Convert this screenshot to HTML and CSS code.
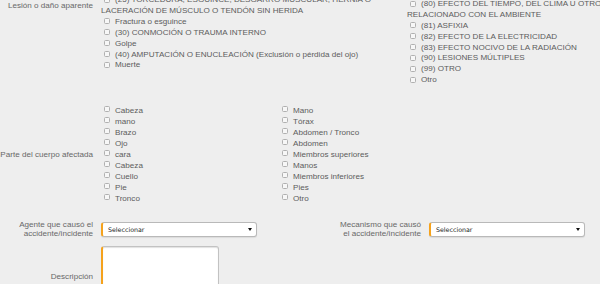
FILE: index.html
```html
<!DOCTYPE html>
<html lang="es">
<head>
<meta charset="utf-8">
<title>Formulario de accidente</title>
<link rel="stylesheet" href="styles.css">
</head>
<body>
<main class="form">
  <section class="row row-lesion">
    <div class="label lbl-lesion">Lesión o daño aparente</div>
    <div class="field">
      <ul class="checks lesion-a">
        <li class="wrap"><div class="opt"><span class="cb"></span><span>(25) TORCEDURA, ESGUINCE, DESGARRO MUSCULAR, HERNIA O</span></div><div class="cont">LACERACIÓN DE MÚSCULO O TENDÓN SIN HERIDA</div></li>
        <li class="opt"><span class="cb"></span><span>Fractura o esguince</span></li>
        <li class="opt"><span class="cb"></span><span>(30) CONMOCIÓN O TRAUMA INTERNO</span></li>
        <li class="opt"><span class="cb"></span><span>Golpe</span></li>
        <li class="opt"><span class="cb"></span><span>(40) AMPUTACIÓN O ENUCLEACIÓN (Exclusión o pérdida del ojo)</span></li>
        <li class="opt"><span class="cb"></span><span>Muerte</span></li>
      </ul>
      <ul class="checks lesion-b">
        <li class="wrap"><div class="opt"><span class="cb"></span><span>(80) EFECTO DEL TIEMPO, DEL CLIMA U OTRO</span></div><div class="cont">RELACIONADO CON EL AMBIENTE</div></li>
        <li class="opt"><span class="cb"></span><span>(81) ASFIXIA</span></li>
        <li class="opt"><span class="cb"></span><span>(82) EFECTO DE LA ELECTRICIDAD</span></li>
        <li class="opt"><span class="cb"></span><span>(83) EFECTO NOCIVO DE LA RADIACIÓN</span></li>
        <li class="opt"><span class="cb"></span><span>(90) LESIONES MÚLTIPLES</span></li>
        <li class="opt"><span class="cb"></span><span>(99) OTRO</span></li>
        <li class="opt"><span class="cb"></span><span>Otro</span></li>
      </ul>
    </div>
  </section>

  <section class="row row-body">
    <div class="label">Parte del cuerpo afectada</div>
    <div class="field">
      <ul class="checks body-list body-a">
        <li class="opt"><span class="cb"></span><span>Cabeza</span></li>
        <li class="opt"><span class="cb"></span><span>mano</span></li>
        <li class="opt"><span class="cb"></span><span>Brazo</span></li>
        <li class="opt"><span class="cb"></span><span>Ojo</span></li>
        <li class="opt"><span class="cb"></span><span>cara</span></li>
        <li class="opt"><span class="cb"></span><span>Cabeza</span></li>
        <li class="opt"><span class="cb"></span><span>Cuello</span></li>
        <li class="opt"><span class="cb"></span><span>Pie</span></li>
        <li class="opt"><span class="cb"></span><span>Tronco</span></li>
      </ul>
      <ul class="checks body-list body-b">
        <li class="opt"><span class="cb"></span><span>Mano</span></li>
        <li class="opt"><span class="cb"></span><span>Tórax</span></li>
        <li class="opt"><span class="cb"></span><span>Abdomen / Tronco</span></li>
        <li class="opt"><span class="cb"></span><span>Abdomen</span></li>
        <li class="opt"><span class="cb"></span><span>Miembros superiores</span></li>
        <li class="opt"><span class="cb"></span><span>Manos</span></li>
        <li class="opt"><span class="cb"></span><span>Miembros inferiores</span></li>
        <li class="opt"><span class="cb"></span><span>Pies</span></li>
        <li class="opt"><span class="cb"></span><span>Otro</span></li>
      </ul>
    </div>
  </section>

  <section class="selects">
    <div class="label two-line">Agente que causó el<br>accidente/incidente</div>
    <div class="select"><span class="select-text">Seleccionar</span><span class="arrow"></span></div>
    <div class="label two-line">Mecanismo que causó<br>el accidente/incidente</div>
    <div class="select"><span class="select-text">Seleccionar</span><span class="arrow"></span></div>
  </section>

  <section class="row row-desc">
    <div class="label">Descripción</div>
    <div class="textarea"></div>
  </section>
</main>
</body>
</html>
```
FILE: styles.css
```css
html, body {
  margin: 0;
  padding: 0;
  overflow: hidden;
  background: #eeeeee;
}

body {
  width: 600px;
  height: 284px;
  font-family: "Liberation Sans", Arial, sans-serif;
  font-size: 8.1px;
  color: #5c5c5c;
}

.form {
  margin-top: -4.65px;
}

.row {
  display: flex;
  column-gap: 8px;
}

.label {
  width: 93px;
  flex: none;
  text-align: right;
  color: #686868;
  line-height: 10.85px;
}

.field {
  display: flex;
  align-items: flex-start;
}

.checks {
  --lh: 10.85px;
  list-style: none;
  margin: 0;
  padding: 0;
  line-height: var(--lh);
  white-space: nowrap;
}

.body-list {
  --lh: 11px;
}

.opt {
  display: flex;
  align-items: center;
  height: var(--lh);
}

.cont {
  height: var(--lh);
}

.cb {
  flex: none;
  box-sizing: border-box;
  width: 6px;
  height: 6px;
  border: 1px solid #b0b0b0;
  border-radius: 1.5px;
  background: #f7f7f7;
  margin: 0 5px 2px 3px;
}

.row-lesion {
  align-items: flex-start;
}

.lbl-lesion {
  margin-top: 5.9px;
}

.lesion-a {
  width: 306px;
  flex: none;
}

.lesion-b {
  margin-top: 3.9px;
}

.row-body {
  align-items: center;
  margin-top: 18.7px;
}

.row-body .label {
  line-height: 11px;
}

.body-a {
  width: 178px;
  flex: none;
}

.selects {
  display: grid;
  grid-template-columns: 93px 156px 156px 156px;
  column-gap: 8px;
  align-items: center;
  margin-top: 16.45px;
}

.selects .label {
  width: auto;
  line-height: 9px;
}

.select {
  box-sizing: border-box;
  height: 15px;
  display: flex;
  align-items: center;
  justify-content: space-between;
  background: #ffffff;
  border: 1px solid #b9b9b9;
  border-left: 2px solid #f5a21c;
  border-radius: 3px;
  box-shadow: 0 1px 1px rgba(0, 0, 0, 0.08);
  padding: 0 4px 0 5px;
}

.select-text {
  font-family: "DejaVu Sans", Verdana, sans-serif;
  font-size: 6.3px;
  color: #1a1a1a;
}

.arrow {
  width: 0;
  height: 0;
  border-left: 2px solid transparent;
  border-right: 2px solid transparent;
  border-top: 3px solid #111111;
}

.row-desc {
  align-items: center;
  margin-top: 7.5px;
}

.textarea {
  box-sizing: border-box;
  width: 118px;
  height: 64px;
  background: #ffffff;
  border: 1px solid #c2c2c2;
  border-left: 2px solid #f5a21c;
  border-radius: 3px;
  box-shadow: inset 0 1px 1px rgba(0, 0, 0, 0.12);
}
```
